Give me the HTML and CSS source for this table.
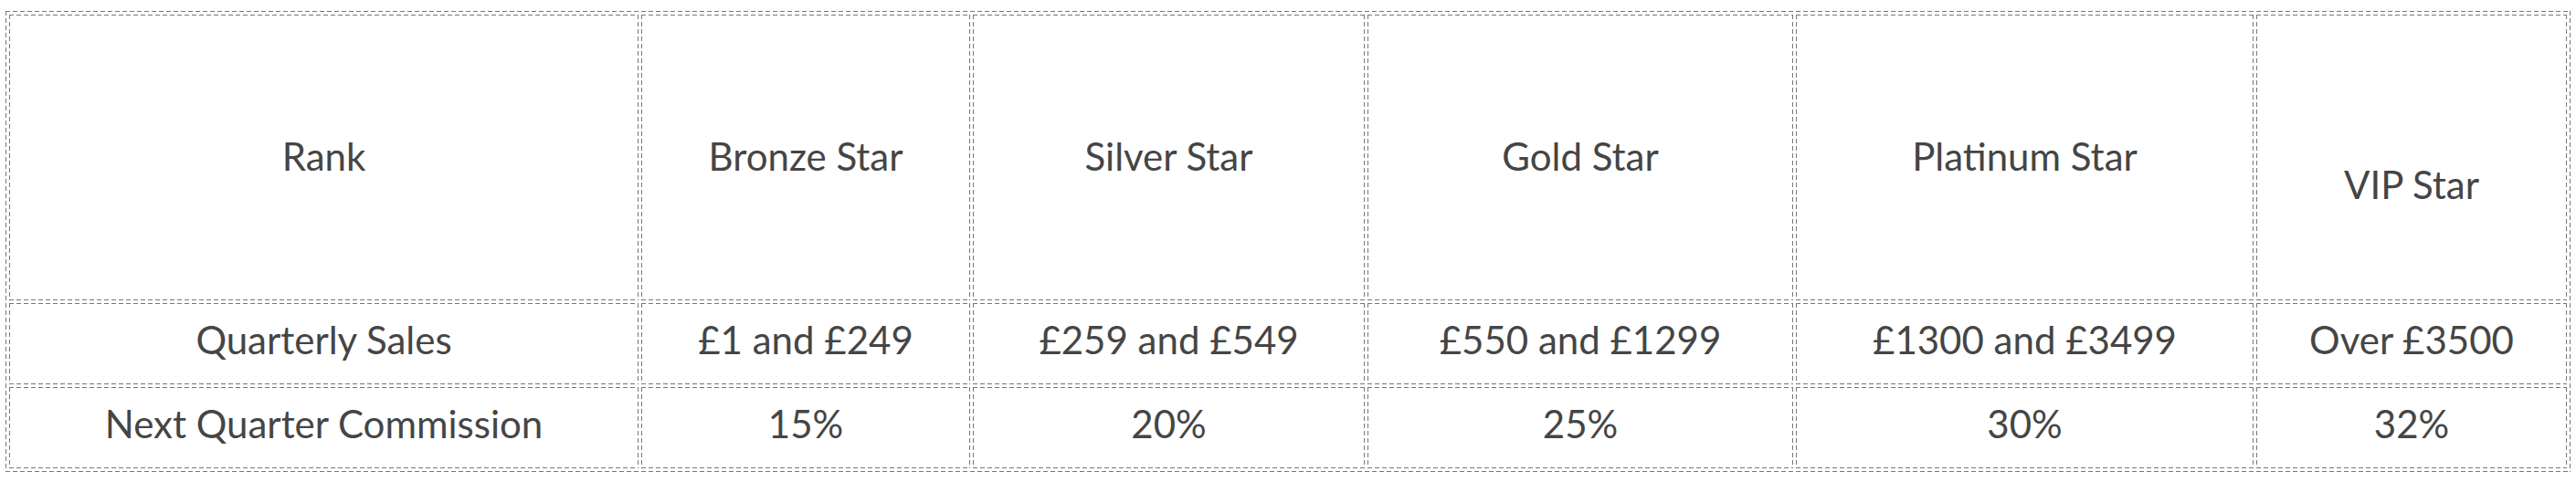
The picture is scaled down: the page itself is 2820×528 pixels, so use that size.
FILE: index.html
```html
<!DOCTYPE html>
<html lang="en">
<head>
<meta charset="utf-8">
<title>Star Ranks</title>
<link rel="stylesheet" href="styles.css">
</head>
<body>
<table class="ranks dash">
  <colgroup>
    <col class="c1"><col class="c2"><col class="c3"><col class="c4"><col class="c5"><col class="c6">
  </colgroup>
  <tr class="head">
    <td class="dash">Rank</td>
    <td class="dash">Bronze Star</td>
    <td class="dash">Silver Star</td>
    <td class="dash">Gold Star</td>
    <td class="dash">Platinum Star</td>
    <td class="dash vip">VIP Star</td>
  </tr>
  <tr class="row">
    <td class="dash">Quarterly Sales</td>
    <td class="dash">£1 and £249</td>
    <td class="dash">£259 and £549</td>
    <td class="dash">£550 and £1299</td>
    <td class="dash">£1300 and £3499</td>
    <td class="dash">Over £3500</td>
  </tr>
  <tr class="row">
    <td class="dash">Next Quarter Commission</td>
    <td class="dash">15%</td>
    <td class="dash">20%</td>
    <td class="dash">25%</td>
    <td class="dash">30%</td>
    <td class="dash">32%</td>
  </tr>
</table>
</body>
</html>
```

FILE: styles.css
```css
html, body {
  background: #ffffff;
}
body {
  margin: 0;
  padding: 12px 0 0 6px;
  font-family: "Lato", "Open Sans", sans-serif;
  color: #454545;
}
.dash {
  border: 1px solid transparent;
  background-origin: border-box;
  background-clip: border-box;
  background-repeat: no-repeat;
  background-image:
    repeating-linear-gradient(to right, #777 0 5px, transparent 5px 8px),
    repeating-linear-gradient(to right, #777 0 5px, transparent 5px 8px),
    repeating-linear-gradient(to bottom, #777 0 5px, transparent 5px 8px),
    repeating-linear-gradient(to bottom, #777 0 5px, transparent 5px 8px);
  background-size: 100% 1px, 100% 1px, 1px 100%, 1px 100%;
  background-position: left top, left bottom, left top, right top;
}
.ranks {
  width: 2808px;
  table-layout: fixed;
  border-collapse: separate;
  border-spacing: 3px;
}
.ranks td {
  text-align: center;
  vertical-align: middle;
  font-size: 42px;
  padding: 0 8px;
}
.c1 { width: 689px; }
.c2 { width: 360px; }
.c3 { width: 429px; }
.c4 { width: 466px; }
.c5 { width: 501px; }
.c6 { width: 340px; }
.head { height: 313px; }
.row { height: 89px; }
.head td { padding-bottom: 4px; }
.row td { padding-bottom: 9px; }
.ranks td.vip { padding-top: 62px; }
```
